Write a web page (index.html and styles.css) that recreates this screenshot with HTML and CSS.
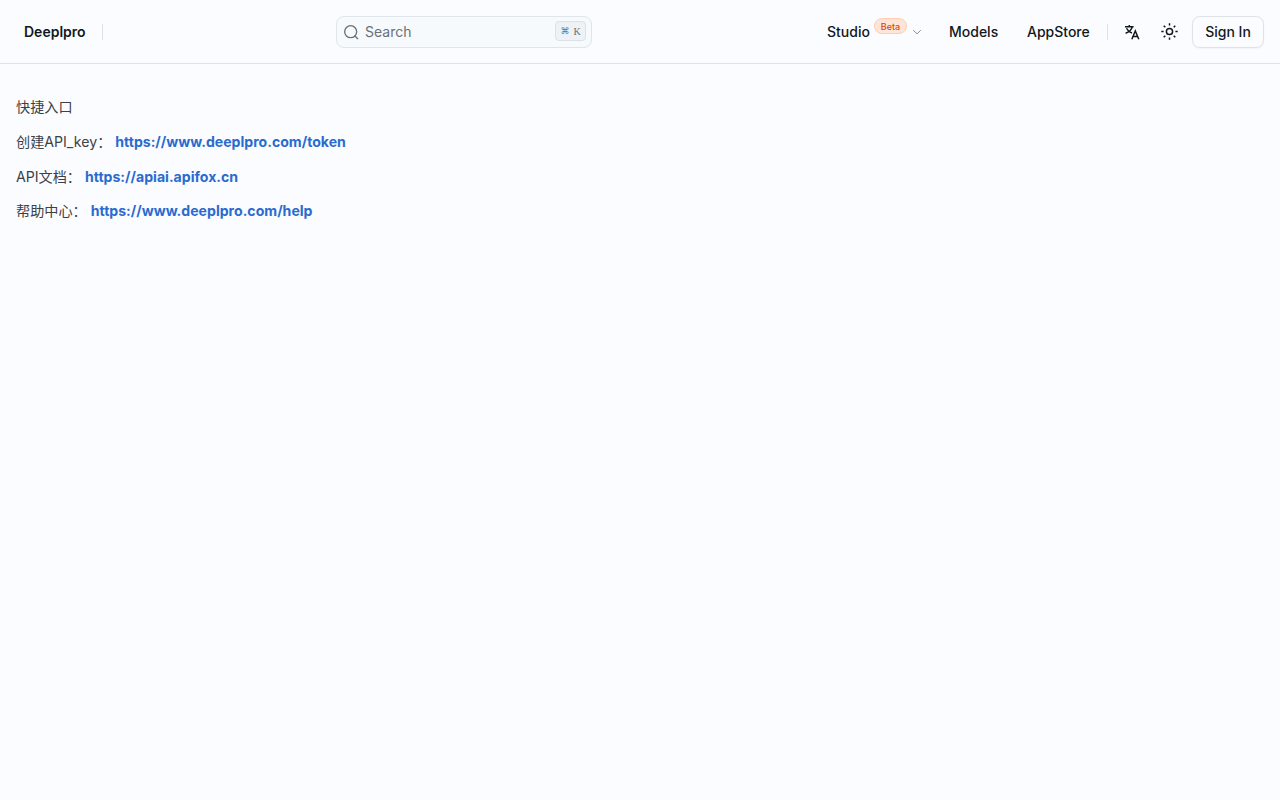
FILE: index.html
```html
<!DOCTYPE html>
<html lang="zh-CN">
<head>
<meta charset="utf-8">
<title>Deeplpro</title>
<link rel="stylesheet" href="styles.css">
</head>
<body>
<header class="header">
  <div class="brand"><a class="brand-name">Deeplpro</a><span class="divider"></span></div>
  <div class="search">
    <svg class="search-icon" width="16" height="16" viewBox="0 0 24 24" fill="none" stroke="currentColor" stroke-width="2" stroke-linecap="round"><circle cx="11.5" cy="11.5" r="9"/><path d="m18 18 4 4"/></svg>
    <span class="search-label">Search</span>
    <kbd class="shortcut"><span class="command">⌘</span><span class="key">K</span></kbd>
  </div>
  <nav class="nav">
    <a class="nav-item studio">Studio</a>
    <span class="badge">Beta</span>
    <svg class="chevron" width="10" height="10" viewBox="0 0 10 10" fill="none" stroke="currentColor" stroke-width="1"><path d="m1.2 3.2 3.8 3.6 3.8-3.6"/></svg>
    <a class="nav-item models">Models</a>
    <a class="nav-item appstore">AppStore</a>
    <span class="divider"></span>
    <svg class="translate" width="16" height="16" viewBox="0 0 16 16" fill="none" stroke="currentColor" stroke-width="1.5"><path d="M1 2.8h8.6M5.3 1v1.8M2.5 4.2c1.1 2.3 3.2 4 5.5 4.8M8.2 3C7.4 5.8 4.7 8.2 1.6 9.2"/><path d="m7.8 15.2 3.5-8.2 3.5 8.2M9 12.6h4.6"/></svg>
    <svg class="sun" width="18" height="18" viewBox="0 0 18 18" fill="none" stroke="currentColor" stroke-width="1.5"><circle cx="9.5" cy="8.5" r="3.1"/><path d="M9.5 .3v2.3M9.5 14.4v2.3M1.3 8.5h2.3M15.4 8.5h2.3M3.7 2.7l1.6 1.6M13.7 12.7l1.6 1.6M3.7 14.3l1.6-1.6M13.7 4.3l1.6-1.6"/></svg>
    <button class="sign-in">Sign In</button>
  </nav>
</header>
<main class="content">
  <p>快捷入口</p>
  <p>创建API_key： <a>https://www.deeplpro.com/token</a></p>
  <p>API文档： <a>https://apiai.apifox.cn</a></p>
  <p>帮助中心： <a>https://www.deeplpro.com/help</a></p>
</main>
</body>
</html>
```
FILE: styles.css
```css
* {
  box-sizing: border-box;
}

body {
  margin: 0;
  min-height: 100vh;
  background: #fbfcff;
  color: #11181c;
  font-family: Inter, "Noto Sans CJK SC", sans-serif;
  font-size: 14px;
  line-height: 20px;
}

.header {
  display: flex;
  align-items: center;
  height: 64px;
  padding: 0 16px 0 24px;
  border-bottom: 1px solid #dfe3e8;
}

.brand {
  display: flex;
  align-items: center;
  width: 312px;
}

.brand-name {
  width: 78px;
  font-weight: 600;
}

.divider {
  width: 1px;
  height: 16px;
  background: #dfe3e8;
}

.search {
  display: flex;
  align-items: center;
  width: 256px;
  height: 32px;
  padding: 0 5px 0 6px;
  border: 1px solid #dfe5ea;
  border-radius: 8px;
  background: #f6fafd;
  color: #697177;
}

.search-label {
  margin-left: 6px;
}

.shortcut {
  display: flex;
  align-items: center;
  justify-content: center;
  gap: 4px;
  width: 31px;
  height: 20px;
  margin-left: auto;
  margin-bottom: 2px;
  border: 1px solid #dbe1e6;
  border-radius: 4px;
  background: #edf2f6;
  color: #687076;
  font-family: "DejaVu Sans", sans-serif;
}

.command {
  font-size: 9px;
}

.key {
  padding-top: 2px;
  font-family: "Liberation Serif", serif;
  font-size: 10px;
}

.nav {
  display: flex;
  align-items: center;
  margin-left: auto;
  font-weight: 500;
}

.studio {
  width: 47px;
}

.badge {
  width: 33px;
  height: 16px;
  margin-bottom: 12px;
  border: 1px solid #ffcdb0;
  border-radius: 8px;
  background: #ffe5d8;
  color: #d9480f;
  font-size: 9px;
  line-height: 15px;
  text-align: center;
}

.chevron {
  margin: 0 27px 0 5px;
  color: #858d94;
}

.models {
  width: 78px;
}

.appstore {
  width: 80px;
}

.translate {
  margin-left: 16px;
}

.sun {
  margin: 0 14px 0 20px;
}

.sign-in {
  width: 72px;
  height: 32px;
  padding: 0;
  border: 1px solid #dfe3e8;
  border-radius: 8px;
  background: #fbfcff;
  color: inherit;
  font: inherit;
  box-shadow: 0 1px 2px rgb(0 0 0 / 4%);
}

.content {
  padding: 31.3px 16px;
  color: #3c4146;
  font-size: 14.15px;
}

.content p {
  margin: 0 0 11.67px;
  height: 23px;
  line-height: 23px;
}

.content a {
  color: #2a6bcf;
  font-size: 14.1px;
  font-weight: 700;
}
```
